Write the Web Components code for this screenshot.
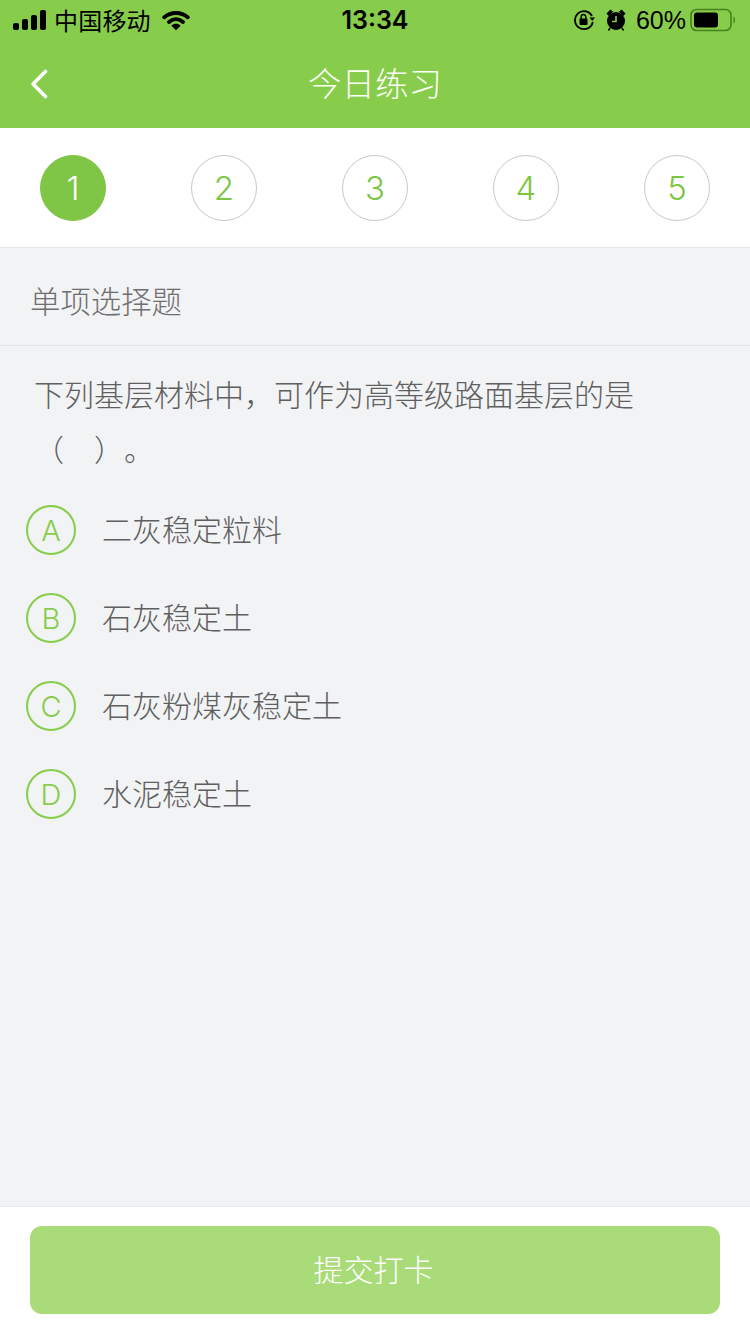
<!DOCTYPE html>
<html lang="zh-CN"><head><meta charset="utf-8"><title>今日练习</title>
<style>
html,body{margin:0;padding:0;height:100%;background:#f2f3f5}
body{font-family:"Noto Sans CJK SC","Noto Sans",sans-serif;width:750px;height:1334px;display:flex;flex-direction:column;overflow:hidden;text-spacing-trim:space-all}
</style></head><body>
<app-header title-text="今日练习"></app-header>
<step-bar count="5" active="1"></step-bar>
<section-title>单项选择题</section-title>
<question-text>下列基层材料中，可作为高等级路面基层的是（　）。</question-text>
<option-list>
<option-row letter="A">二灰稳定粒料</option-row>
<option-row letter="B">石灰稳定土</option-row>
<option-row letter="C">石灰粉煤灰稳定土</option-row>
<option-row letter="D">水泥稳定土</option-row>
</option-list>
<submit-bar>提交打卡</submit-bar>
<script>
function def(name, html){
  customElements.define(name, class extends HTMLElement{
    connectedCallback(){
      if(this.shadowRoot) return;
      const r=this.attachShadow({mode:'open'});
      r.innerHTML=typeof html==='function'?html(this):html;
    }
  });
}
def('app-header', el=>`<style>
:host{display:block;background:#87cd4b;height:128px;flex:none;color:#fff}
.status{height:40px;display:grid;grid-template-columns:1fr auto 1fr;align-items:center;color:#000;font-family:"Liberation Sans","Noto Sans CJK SC",sans-serif}
.l{display:flex;align-items:center;padding-left:13px}
.carrier{font:400 24px "Noto Sans CJK SC",sans-serif;margin-left:7px;line-height:40px;letter-spacing:.2px}
.wifi{margin-left:11px}
.time{font:600 25px "Inter","Liberation Sans",sans-serif}
.r{display:flex;align-items:center;justify-content:flex-end;padding-right:14px}
.pct{font-size:25px;margin:0 4px 0 9px;font-family:"Liberation Sans",sans-serif}
.nav{height:88px;display:grid;grid-template-columns:1fr auto 1fr;align-items:center}
.back{padding-left:28px;display:flex}
.title{font:300 33.500px/84px "Noto Sans CJK SC",sans-serif;color:#fbfff6;height:88px}
</style>
<div class="status">
<div class="l">
<svg width="34" height="20" viewBox="0 0 34 20"><g fill="#000"><rect x="0" y="13" width="6" height="7" rx="2"/><rect x="9" y="9" width="6" height="11" rx="2"/><rect x="18" y="5" width="6" height="15" rx="2"/><rect x="27" y="0" width="6" height="20" rx="2"/></g></svg>
<span class="carrier">中国移动</span>
<svg class="wifi" width="28" height="21" viewBox="0 0 30 22"><path d="M2.500 7.500C9.500 1.500 20.500 1.500 27.500 7.500" fill="none" stroke="#000" stroke-width="4.200" stroke-linecap="round"/><path d="M7.500 12.500C12 8.800 18 8.800 22.500 12.500" fill="none" stroke="#000" stroke-width="4.200" stroke-linecap="round"/><path d="M10 16.500C13 13.800 17 13.800 20 16.500L15 21.500Z" fill="#000"/></svg>
</div>
<div class="time">13:34</div>
<div class="r">
<svg width="22" height="22" viewBox="0 0 22 22"><path d="M19 7A9 9 0 1 0 19.800 13" fill="none" stroke="#000" stroke-width="1.800"/><path d="M16.500 8.500h5.500l-2.700 3.500z" fill="#000"/><rect x="6.500" y="9.500" width="8" height="6.500" rx="1" fill="#000"/><path d="M8.200 10V7.800a2.300 2.300 0 0 1 4.600 0V10" fill="none" stroke="#000" stroke-width="1.500"/></svg>
<svg style="margin-left:10px" width="22" height="24" viewBox="0 0 22 24"><circle cx="11" cy="13" r="9" fill="#000"/><path d="M2.500 5.500 5.500 2.500 7 3.800 3.800 7ZM19.500 5.500 16.500 2.500 15 3.800 18.200 7ZM5 20 3.500 22.500M17 20 18.500 22.500" fill="#000" stroke="#000" stroke-width="1.500"/><path d="M11 8v5.500H7" fill="none" stroke="#87cd4b" stroke-width="1.600"/></svg>
<span class="pct">60%</span>
<svg width="46" height="24" viewBox="0 0 46 24"><rect x="1" y="1.500" width="40" height="21" rx="5.500" fill="none" stroke="#47801f" stroke-width="1.600"/><rect x="4" y="4.500" width="24" height="15" rx="3" fill="#000"/><path d="M43.500 8.500c2 .8 2 6.200 0 7z" fill="#47801f"/></svg>
</div>
</div>
<div class="nav">
<div class="back"><svg width="22" height="34" viewBox="0 0 22 34"><path d="M17.500 4.500 5 17l12.500 12.500" fill="none" stroke="#fff" stroke-width="3.600" stroke-linecap="round" stroke-linejoin="round"/></svg></div>
<div class="title">${el.getAttribute('title-text')}</div>
<div></div>
</div>`);
def('step-bar', el=>{
  const n=+el.getAttribute('count'),a=+el.getAttribute('active');
  let s='';
  for(let i=1;i<=n;i++) s+=`<div class="c${i===a?' on':''}">${i}</div>`;
  return `<style>
:host{display:flex;justify-content:space-between;align-items:center;background:#fff;height:119px;padding:0 40px;flex:none;border-bottom:1px solid #e6e6e6;box-sizing:content-box;width:670px}
.c{width:66px;height:66px;box-sizing:border-box;border-radius:50%;border:1px solid #c9c9c9;color:#7cc644;display:flex;align-items:center;justify-content:center;font:350 33px "Inter","Liberation Sans",sans-serif}
.on{background:#7fc647;border-color:#7fc647;color:#fff}
</style>${s}`;
});
def('section-title',`<style>
:host{display:block;height:97px;line-height:104px;padding-left:30px;font-size:30.400px;font-weight:300;color:#6f6f6f;border-bottom:1px solid #e4e5e7;flex:none}
</style><slot></slot>`);
def('question-text',`<style>
:host{display:block;padding:20px 100px 0 34px;font-size:30px;line-height:55px;font-weight:300;color:#5f5f5f;flex:none;height:133px;box-sizing:border-box;text-spacing-trim:space-all}
</style><slot></slot>`);
def('option-list',`<style>
:host{display:flex;flex-direction:column;gap:38px;padding:26px 0 0 26px;flex:1;min-height:0}
</style><slot></slot>`);
def('option-row',el=>`<style>
:host{display:flex;align-items:center;height:50px}
.b{width:50px;height:50px;box-sizing:border-box;border:2px solid #87cd4b;border-radius:50%;color:#87cd4b;display:flex;align-items:center;justify-content:center;font:350 29px "Inter","Liberation Sans",sans-serif;flex:none}
.t{margin-left:26px;font-size:30px;font-weight:300;color:#5f5f5f;line-height:46px;height:50px}
</style><div class="b">${el.getAttribute('letter')}</div><div class="t"><slot></slot></div>`);
def('submit-bar',`<style>
:host{display:block;background:#fff;border-top:1px solid #e9e9ee;height:128px;box-sizing:border-box;padding:19px 30px 0;flex:none}
.btn{height:88px;border-radius:12px;background:#a9dc78;color:#fff;font-size:30px;font-weight:300;line-height:84px;text-align:center;padding-right:3px;box-sizing:border-box}
</style><div class="btn"><slot></slot></div>`);
</script>
</body></html>
